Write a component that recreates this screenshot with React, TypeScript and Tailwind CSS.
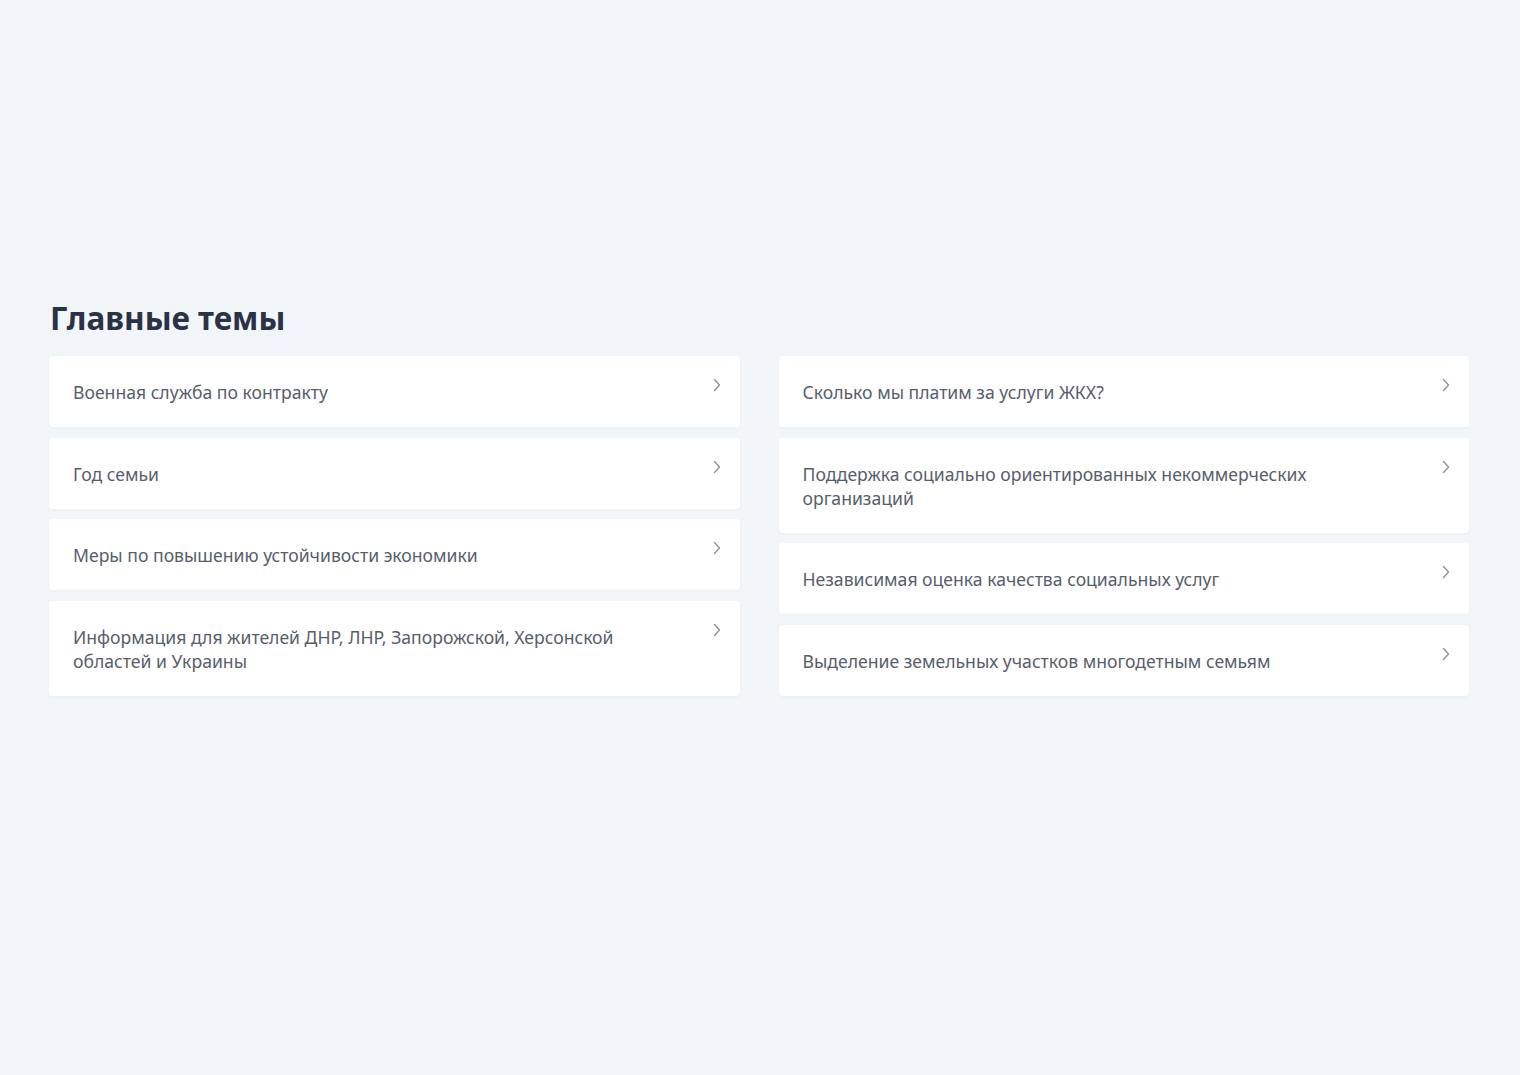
import React from "react";

const leftTopics = [
  "Военная служба по контракту",
  "Год семьи",
  "Меры по повышению устойчивости экономики",
  "Информация для жителей ДНР, ЛНР, Запорожской, Херсонской областей и Украины",
];

const rightTopics = [
  "Сколько мы платим за услуги ЖКХ?",
  "Поддержка социально ориентированных некоммерческих организаций",
  "Независимая оценка качества социальных услуг",
  "Выделение земельных участков многодетным семьям",
];

const Chevron = () => (
  <svg width="8" height="14" viewBox="0 0 8 14" fill="none" className="shrink-0 mt-[-2px]">
    <path d="M1.5 1.5L6.5 7L1.5 12.5" stroke="#8d939c" strokeWidth="1.4" strokeLinecap="round" strokeLinejoin="round" />
  </svg>
);

const TopicCard = ({ title }: { title: string }) => (
  <a
    href="#"
    className="flex items-start justify-between gap-6 rounded-[4px] bg-white pl-6 pr-[19px] pt-6 pb-[23px] shadow-[0_1px_3px_rgba(30,40,60,0.04)]"
  >
    <span className="max-w-[580px] text-[17.6px] leading-[24px] text-[#575e6b]">{title}</span>
    <Chevron />
  </a>
);

export default function App() {
  return (
    <div className="min-h-screen bg-[#f3f6f9] font-['Noto_Sans','Open_Sans',sans-serif]">
      <div className="mx-[49px] pt-[298px]">
        <h2 className="mb-[18px] pl-px text-[31.5px] font-bold leading-[40px] text-[#2c3246]">Главные темы</h2>
        <div className="grid grid-cols-2 gap-x-[39px] w-[1420px]">
          <div className="flex flex-col gap-[10.67px]">
            {leftTopics.map((t, i) => (
              <TopicCard key={i} title={t} />
            ))}
          </div>
          <div className="flex flex-col gap-[10.67px]">
            {rightTopics.map((t, i) => (
              <TopicCard key={i} title={t} />
            ))}
          </div>
        </div>
      </div>
    </div>
  );
}
